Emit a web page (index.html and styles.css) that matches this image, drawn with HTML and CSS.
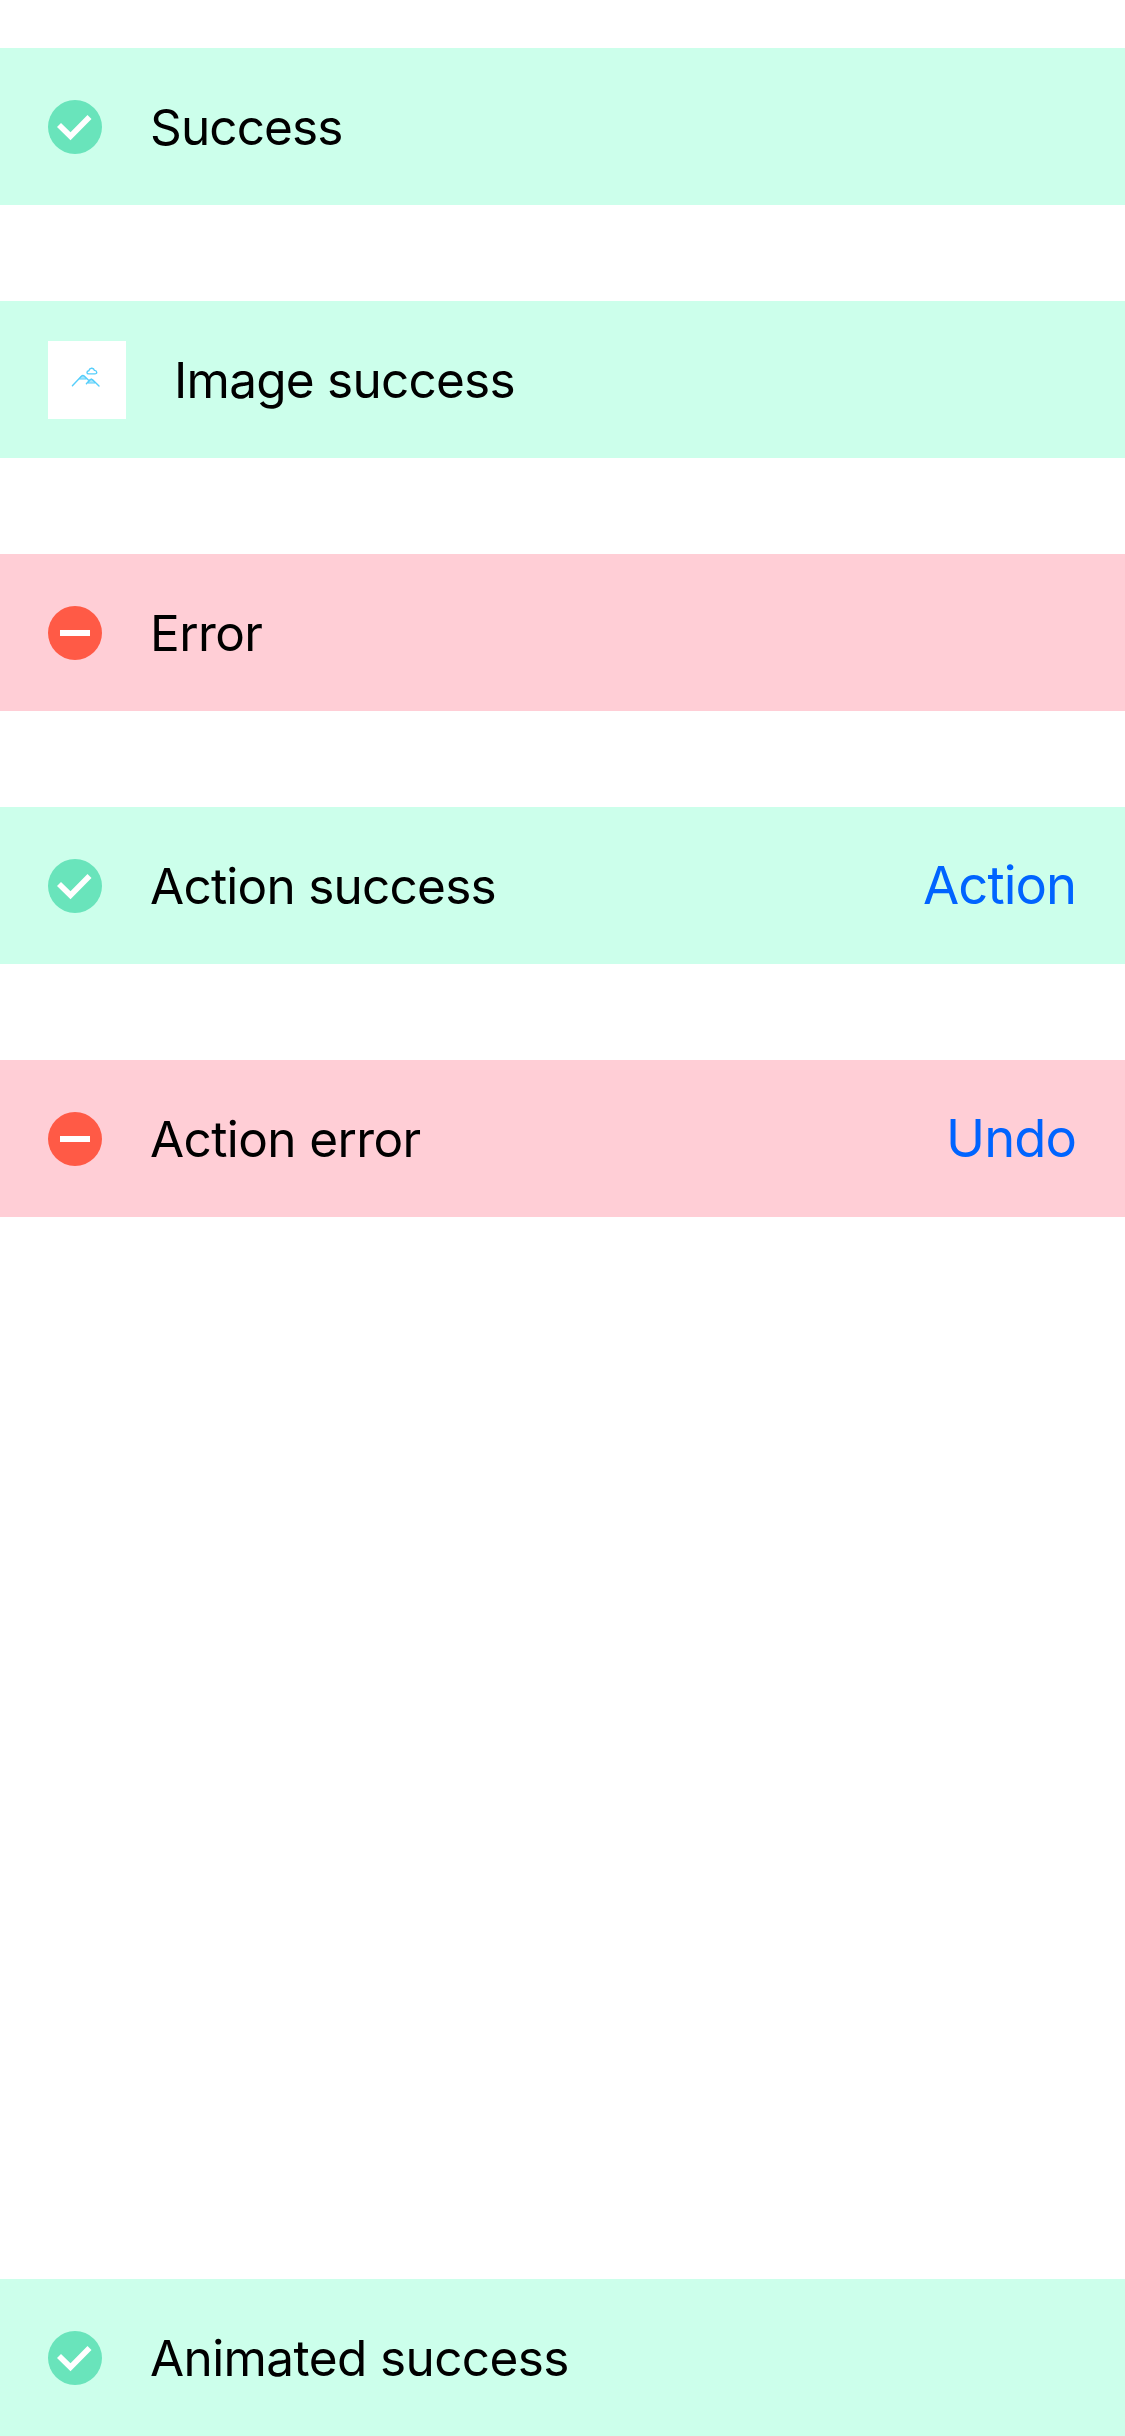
FILE: index.html
```html
<!DOCTYPE html>
<html lang="en">
<head>
<meta charset="utf-8">
<title>Notifications</title>
<link rel="stylesheet" href="styles.css">
</head>
<body>
<svg class="defs" aria-hidden="true">
  <symbol id="check" viewBox="0 0 54 54">
    <circle cx="27" cy="27" r="27" fill="#69e4bb"/>
    <path d="M9 27l4-4 9.500 9.200L39.500 15l4 4-21 21.300z" fill="#fff"/>
  </symbol>
  <symbol id="minus" viewBox="0 0 54 54">
    <circle cx="27" cy="27" r="27" fill="#ff5a46"/>
    <path d="M12 24h30v6H12z" fill="#fff"/>
  </symbol>
</svg>
<main class="screen">
  <div class="bar success"><svg class="icon"><use href="#check"/></svg><span class="label tight">Success</span></div>
  <div class="bar success">
    <svg class="picture" viewBox="0 0 78 78" fill="none" stroke="#55cefb" stroke-width="1.4" stroke-linejoin="round" stroke-linecap="round">
      <path d="M31.500 37.700l2.200-2.800q1.200-1 2.400 0l2.200 2.800zM40 41.700l2.200-3q1.200-1 2.400 0l2.400 3z" fill="#a8e6fc" stroke-width="1"/>
      <path d="M24.400 44.800l9.200-9.800q1.300-1.200 2.600 0l4.900 4.800M38.400 42.800l3.600-4q1.300-1.200 2.600 0l6.400 6.200"/>
      <path d="M40.800 32.900C38.400 32.900 38.300 30 40.900 29.700C41.300 26.900 45.600 26 46.400 29.400C49.300 29.600 49.500 32.900 46.900 32.900Z"/>
    </svg>
    <span class="label">Image success</span>
  </div>
  <div class="bar error"><svg class="icon"><use href="#minus"/></svg><span class="label loose">Error</span></div>
  <div class="bar success"><svg class="icon"><use href="#check"/></svg><span class="label">Action success</span><span class="action">Action</span></div>
  <div class="bar error"><svg class="icon"><use href="#minus"/></svg><span class="label loose">Action error</span><span class="action">Undo</span></div>
  <div class="bar success last"><svg class="icon"><use href="#check"/></svg><span class="label loose">Animated success</span></div>
</main>
</body>
</html>
```
FILE: styles.css
```css
body { margin: 0; background: #fff; color: #000; font-family: Inter, "Liberation Sans", sans-serif; }
.defs { display: none; }
.screen { display: flex; flex-direction: column; gap: 96px; box-sizing: border-box; height: 2436px; padding-top: 48px; }
.bar { display: flex; align-items: center; gap: 48px; box-sizing: border-box; height: 157px; flex: none; padding: 1px 48px 0; }
.success { background: #ccffeb; }
.error { background: #ffced6; }
.last { margin-top: auto; }
.icon { width: 54px; height: 54px; flex: none; }
.picture { width: 78px; height: 78px; flex: none; background: #fff; }
.label { font-size: 49.5px; line-height: 60px; letter-spacing: -0.76px; white-space: nowrap; }
.label.tight { letter-spacing: -0.88px; }
.label.loose { letter-spacing: -0.6px; }
.action { margin: 0 1px 0 auto; padding-bottom: 2px; font-size: 52.5px; line-height: 60px; letter-spacing: -0.95px; color: #0064ff; }
```
